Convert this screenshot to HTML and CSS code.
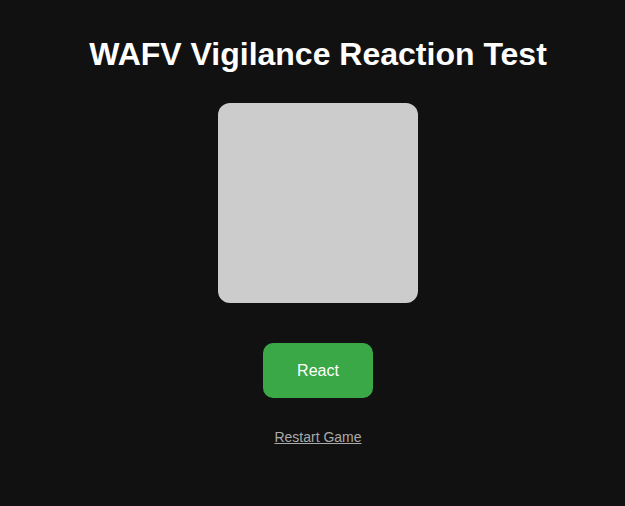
FILE: index.html
```html
<!DOCTYPE html>
<html lang="en">

<head>
    <meta charset="UTF-8">
    <meta name="viewport" content="width=device-width, initial-scale=1.0">
    <title>WAFV Vigilance Reaction Test</title>
    <link rel="stylesheet" href="styles.css">
</head>

<body>
    <h1>WAFV Vigilance Reaction Test</h1>
    <div class="stimulus"></div>
    <button class="react-btn">React</button>
    <div>
        <a href="#" class="restart">Restart Game</a>
    </div>
</body>

</html>
```

FILE: styles.css
```css
body {
    margin: 0;
    padding: 22px 20px 20px 31px;
    background: #111111;
    color: white;
    font-family: "Liberation Sans", Arial, sans-serif;
    text-align: center;
}

h1 {
    font-size: 32px;
    margin: 14px 0 30px;
}

.stimulus {
    width: 200px;
    height: 200px;
    margin: 0 auto;
    background: #cccccc;
    border-radius: 12px;
}

.react-btn {
    margin-top: 40px;
    width: 110px;
    height: 55px;
    background: #3aa846;
    color: white;
    border: none;
    border-radius: 10px;
    font-family: "Liberation Sans", Arial, sans-serif;
    font-size: 16px;
}

.restart {
    display: inline-block;
    margin-top: 31px;
    color: #aaaaaa;
    font-size: 14px;
}
```
